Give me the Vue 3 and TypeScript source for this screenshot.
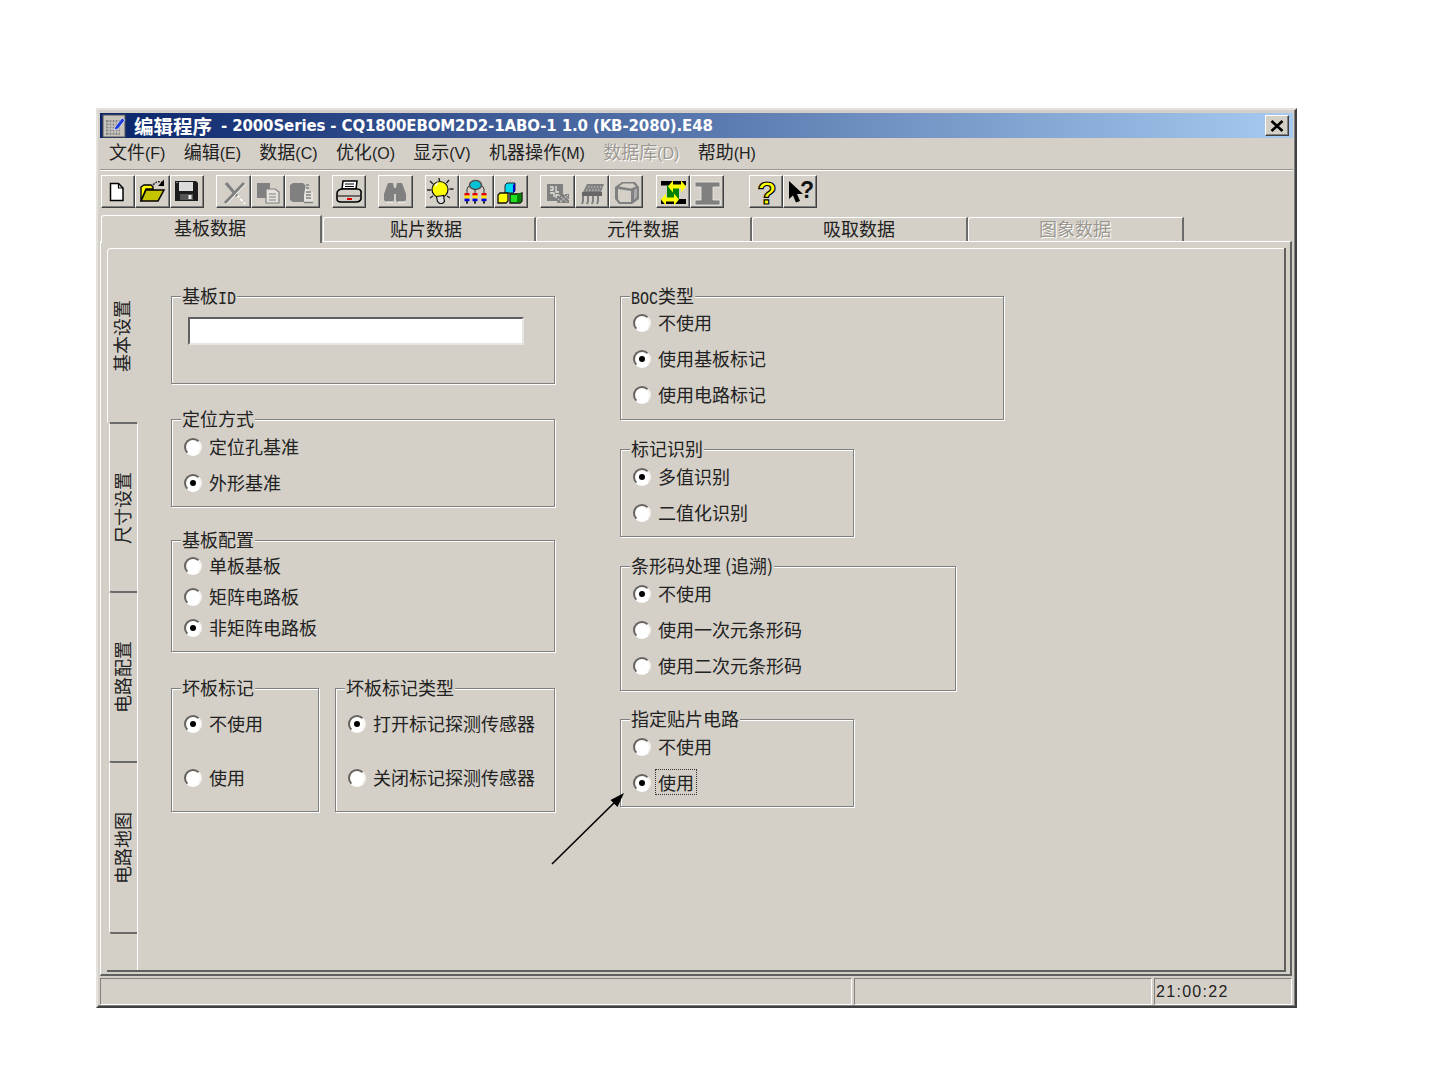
<script setup lang="ts">
const menus = [
  { t: '文件', k: '(F)' }, { t: '编辑', k: '(E)' }, { t: '数据', k: '(C)' }, { t: '优化', k: '(O)' },
  { t: '显示', k: '(V)' }, { t: '机器操作', k: '(M)' }, { t: '数据库', k: '(D)', off: true }, { t: '帮助', k: '(H)' },
]
const g = '#808080'
const bars = [8, 16, 25]
  .map(
    (x) =>
      `<path d="M${x} 14v4" stroke="#333"/><rect x="${x - 2.5}" y="18" width="5" height="2.6" fill="#e80000"/><rect x="${x - 2.5}" y="20.600" width="5" height="3" fill="#ffe800"/><rect x="${x - 2.5}" y="23.600" width="5" height="2.6" fill="#0000e0"/><rect x="${x - 1}" y="26.200" width="2" height="2.400" fill="#222"/>`,
  )
  .join('')
const icons: Record<string, string> = {
  fresh: `<path d="M9.500 8.500h8l4.500 4.500v12.500H9.500z" fill="#fff" stroke="#000" stroke-width="1.500"/><path d="M17.500 8.500v4.500h4.500" fill="none" stroke="#000" stroke-width="1.200"/>`,
  open: `<path d="M6 26V12l3-2h7l2 2v2H11L6 26z" fill="#ffff00" stroke="#000" stroke-width="1.400"/><path d="M6 26l5-11h18l-6 11z" fill="#c4c400" stroke="#000" stroke-width="1.500"/><path d="M18 10q4-5 9-2.500" fill="none" stroke="#333" stroke-width="1.500" stroke-dasharray="2 1"/><path d="M29 4.500v6.500h-6z" fill="#000"/>`,
  save: `<path d="M5 6h21l2 2v18H5z" fill="#1c1c1c"/><rect x="9" y="7" width="14" height="9" fill="#dcdcdc"/><rect x="10" y="19" width="13" height="6" fill="#555"/><rect x="18.500" y="20" width="3" height="4" fill="#eee"/><path d="M6 7h2v1H6z" fill="#888"/>`,
  cut: `<path d="M10 8l18 20" stroke="#fff" stroke-width="1.800" stroke-dasharray="3 2" transform="translate(1 1)"/><path d="M10 8l11 13" stroke="${g}" stroke-width="3"/><path d="M28 8L9 28" stroke="#fff" stroke-width="1.800" transform="translate(1 1)"/><path d="M28 8L9 28" stroke="${g}" stroke-width="2.800"/>`,
  copy: `<rect x="6" y="8" width="13" height="15" fill="${g}"/><path d="M15 14h9l4 3v11H15z" fill="#e6e3dc" stroke="${g}" stroke-width="1.200"/><path d="M18 19h7M18 22h7M18 25h7" stroke="${g}"/>`,
  paste: `<path d="M8 8h10l3 3v16H8l-3-2V10z" fill="${g}"/><path d="M21 9v5l7 3v11h-9v-8z" fill="#e6e3dc"/><path d="M21 10h3M21 13h3M21 17h5M21 20h5M21 23h5M19 27.500h9" stroke="${g}" stroke-width="1.300"/>`,
  print: `<path d="M11 6h14l-1 8H10z" fill="#fff" stroke="#000" stroke-width="1.500"/><path d="M13 9h9M13 11.500h9" stroke="#000"/><path d="M5 19q0-5 6-5h14q5 0 4 5v5q-1 3-5 3H9q-4 0-4-3z" fill="#d4d0c8" stroke="#000" stroke-width="1.600"/><path d="M6 21h22" stroke="#000"/><rect x="15" y="23" width="5" height="2" fill="#e00000"/>`,
  find: `<path d="M10 8h5l1 5h2l1-5h5l4 11v6l-2 2h-7l-1-2v-6h-2v6l-1 2H8l-2-2v-6z" fill="${g}"/><path d="M8 27h7M20 27h7" stroke="#fff"/>`,
  bulb: `<path d="M14 3l.5 3M5 6l3 3M24 5l-2.500 3M2 15h4M24.500 14h4M5 23l3-2M25 23l-3-2" stroke="#222" stroke-width="1.400"/><circle cx="15" cy="14.500" r="8" fill="#ffff00" stroke="#111" stroke-width="1.200"/><path d="M10 11l3-3" stroke="#fff" stroke-width="1.600"/><path d="M11.500 21.500l7-1 1 6-2 2h-3l-2-2z" fill="#ddd" stroke="#111" stroke-width="1.200"/>`,
  tree: `<path d="M8 14q0-3 4-3M25 14q0-3-4-3" fill="none" stroke="#333"/><ellipse cx="16.500" cy="10" rx="6" ry="4.500" fill="#00c4d8" stroke="#555" stroke-width="1.600"/>${bars}`,
  cubes: `<path d="M11 10l2-2h8v8l-2 2h-8z" fill="#00d8f0" stroke="#222"/><path d="M19 10l2-2v8l-2 2z" fill="#0000d0"/><path d="M4 20l2-2h8v8l-2 2H4z" fill="#ffff00" stroke="#111" stroke-width="1.300"/><path d="M16 19h9l3-1v8l-2 2h-10z" fill="#20e020" stroke="#111" stroke-width="1.300"/><path d="M23 19l4-1v8l-4 2z" fill="#008000"/>`,
  board: `<rect x="7" y="9" width="16" height="17" fill="${g}"/><path d="M10 12h3v3h-3M16 11v6h3M10 18h4v4M19 20h-3v3" fill="none" stroke="#e6e3dc" stroke-width="1.300"/><path d="M19 19h10v9H17z" fill="${g}"/><path d="M19 20l9 8M24 19l5 6M18 24l5 4M28 20l-9 8" stroke="#e6e3dc" stroke-dasharray="1.500 1.500"/>`,
  chip: `<path d="M8 17l4-8h17l-3 8z" fill="${g}"/><path d="M11 15h14M13 12h14" stroke="#d4d0c8" stroke-dasharray="1.500 1.500"/><rect x="7" y="17" width="20" height="4" fill="#666"/><path d="M8 21v5l-1 3M13 21v5l-1 3M18 21v5l-1 3M23 21v5l-1 3" fill="none" stroke="${g}" stroke-width="2"/>`,
  box: `<path d="M6 12l7-5h13l4 5v12l-7 5H10l-4-5z" fill="${g}"/><path d="M9 14l13 2v11H11l-2-3z" fill="#d4d0c8"/><path d="M10 11.500l4-3h10l3 3-5 2z" fill="#d4d0c8"/><path d="M25 15l3-2v9l-3 3z" fill="#aaa"/>`,
  swap: `<path d="M5 6h25v4.500h-7v13.500h7v5H5v-5h6V10.500H5z" fill="#000"/><rect x="11" y="10" width="12" height="14" fill="#008000"/><path d="M12 11.500l5-6v4h8v-4l5 6-5 6v-4h-8v4z" fill="#ffff00"/><path d="M5 24.500l5-6v4h8v-4l5 6-5 6v-4h-8v4z" fill="#ffff00"/>`,
  beam: `<path d="M5 7h25v5h-7v13h7v5H5v-5h6V12H5z" fill="${g}" stroke="#eeece6" stroke-width=".8"/>`,
  help: `<text x="18" y="29" text-anchor="middle" class="q yq">?</text>`,
  pointer: `<path d="M6 6v18l4-3.500 3 7 4-1.500-3-7h6z" fill="#000"/><text x="24" y="23" text-anchor="middle" class="q bq">?</text>`,
}
const toolbar = [
  ['fresh', 'open', 'save'], ['cut', 'copy', 'paste'], ['print'], ['find'],
  ['bulb', 'tree', 'cubes'], ['board', 'chip', 'box'], ['swap', 'beam'], ['help', 'pointer'],
]
const tabs = [
  { t: '基板数据', c: 'first' }, { t: '贴片数据', c: 'w213' }, { t: '元件数据', c: '' },
  { t: '吸取数据', c: '' }, { t: '图象数据', c: 'off' },
]
const vtabs = ['基本设置', '尺寸设置', '电路配置', '电路地图']
type Opt = { t: string; on?: boolean; focus?: boolean }
type Grp = { c: string; pre: string; lat?: string; post?: string; input?: boolean; opts?: Opt[] }
const off = (t: string): Opt => ({ t })
const on = (t: string): Opt => ({ t, on: true })
const id: Grp = { c: 'g-id', pre: '基板', lat: 'ID', input: true }
const pos: Grp = { c: 'g-pos', pre: '定位方式', opts: [off('定位孔基准'), on('外形基准')] }
const cfg: Grp = { c: 'g-cfg', pre: '基板配置', opts: [off('单板基板'), off('矩阵电路板'), on('非矩阵电路板')] }
const bad: Grp = { c: 'g-bad', pre: '坏板标记', opts: [on('不使用'), off('使用')] }
const badType: Grp = { c: 'g-badt', pre: '坏板标记类型', opts: [on('打开标记探测传感器'), off('关闭标记探测传感器')] }
const right: Grp[] = [
  { c: 'g-boc', pre: '', lat: 'BOC', post: '类型', opts: [off('不使用'), on('使用基板标记'), off('使用电路标记')] },
  { c: 'g-mark', pre: '标记识别', opts: [on('多值识别'), off('二值化识别')] },
  { c: 'g-bar', pre: '条形码处理 (追溯)', opts: [on('不使用'), off('使用一次元条形码'), off('使用二次元条形码')] },
  { c: 'g-spec', pre: '指定贴片电路', opts: [off('不使用'), { t: '使用', on: true, focus: true }] },
]
const left: Grp[][] = [[id], [pos], [cfg], [bad, badType]]
</script>

<template>
  <div class="root">
    <div class="window">
      <div class="title">
        <svg class="appicon" viewBox="0 0 24 24" width="24" height="24">
          <rect x="1" y="1" width="22" height="22" fill="#c8c4bc" stroke="#555" />
          <path d="M4 6h14v15H4z" fill="#8c8880" />
          <path d="M4 9h14M4 12h14M4 15h14M4 18h14M7 6v15M10 6v15M13 6v15M16 6v15" stroke="#d0d0d0" />
          <path d="M13 13l7-9 3 2-7 9-4 1z" fill="#1c3cd8" stroke="#fff" stroke-width=".6" />
        </svg>
        <span class="cn">编辑程序</span>
        <span class="lt">- 2000Series - CQ1800EBOM2D2-1ABO-1 1.0 (KB-2080).E48</span>
        <button class="close">
          <svg viewBox="0 0 14 12" width="14" height="12"><path d="M1.500 1l11 10M12.500 1l-11 10" stroke="#000" stroke-width="2.600" /></svg>
        </button>
      </div>

      <div class="menu">
        <span v-for="m in menus" :key="m.t" class="menuitem" :class="{ off: m.off }">{{ m.t }}<i>{{ m.k }}</i></span>
      </div>

      <div class="toolbar">
        <div v-for="(grp, i) in toolbar" :key="i" class="tgroup">
          <div v-for="b in grp" :key="b" class="tbtn">
            <svg viewBox="0 0 34 33" width="34" height="33" v-html="icons[b]"></svg>
          </div>
        </div>
      </div>

      <div class="tabs">
        <div v-for="t in tabs" :key="t.t" class="tab" :class="t.c">{{ t.t }}</div>
      </div>

      <div class="frame">
        <div class="tabpage">
          <div class="vtabs">
            <div v-for="(v, i) in vtabs" :key="v" class="vtab" :class="i === 0 ? 'active' : 'v' + i"><span>{{ v }}</span></div>
          </div>
          <div class="page">
            <div class="col">
              <div v-for="(row, ri) in left" :key="ri" class="grow">
                <fieldset v-for="gp in row" :key="gp.c" class="group" :class="gp.c">
                  <div class="legend">{{ gp.pre }}<span v-if="gp.lat" class="lat">{{ gp.lat }}</span>{{ gp.post }}</div>
                  <div v-if="gp.input" class="input"></div>
                  <div v-else class="rows">
                    <div v-for="o in gp.opts" :key="o.t" class="row">
                      <span class="radio" :class="{ on: o.on }"></span>
                      <span class="label" :class="{ focus: o.focus }">{{ o.t }}</span>
                    </div>
                  </div>
                </fieldset>
              </div>
            </div>
            <div class="col">
              <fieldset v-for="gp in right" :key="gp.c" class="group" :class="gp.c">
                <div class="legend">{{ gp.pre }}<span v-if="gp.lat" class="lat">{{ gp.lat }}</span>{{ gp.post }}</div>
                <div class="rows">
                  <div v-for="o in gp.opts" :key="o.t" class="row">
                    <span class="radio" :class="{ on: o.on }"></span>
                    <span class="label" :class="{ focus: o.focus }">{{ o.t }}</span>
                  </div>
                </div>
              </fieldset>
            </div>
          </div>
        </div>
      </div>

      <div class="status">
        <div class="cell c1"></div>
        <div class="cell c2"></div>
        <div class="cell c3">21:00:22</div>
      </div>
    </div>

    <svg class="arrow" viewBox="0 0 90 90" width="90" height="90">
      <path d="M6 76L70 13" stroke="#000" stroke-width="1.600" />
      <path d="M78 5L64.500 12 71.500 19z" fill="#000" />
    </svg>
  </div>
</template>

<style>
html, body { background: #fff; margin: 0; }
</style>

<style scoped>
.root {
  position: relative;
  width: 1440px;
  height: 1080px;
  padding: 108px 0 0 96px;
  box-sizing: border-box;
  font-family: "Noto Sans CJK SC", "Liberation Sans", sans-serif;
  font-size: 18px;
  color: #222;
}
.window {
  width: 1201px;
  height: 900px;
  box-sizing: border-box;
  background: #d4d0c8;
  border: 2px solid;
  border-color: #e4e2dc #404040 #404040 #e4e2dc;
  padding: 3px 2px 0;
  box-shadow: inset -1px -1px 0 #808080;
  display: flex;
  flex-direction: column;
}
.title {
  height: 25px;
  flex: none;
  display: flex;
  align-items: center;
  background: linear-gradient(90deg, #0a246a, #a6caf0);
  color: #fff;
  padding: 0 4px 0 2px;
}
.appicon { flex: none; }
.cn { font-weight: 700; font-size: 19.500px; margin-left: 8px; line-height: 25px; }
.lt {
  font-family: "DejaVu Sans", sans-serif;
  font-weight: 700;
  font-size: 15px;
  margin-left: 9px;
  white-space: pre;
  letter-spacing: -0.130px;
}
.close {
  margin-left: auto;
  width: 24px;
  height: 21px;
  padding: 0;
  background: #d4d0c8;
  border: 1px solid;
  border-color: #fff #404040 #404040 #fff;
  box-shadow: inset -1px -1px 0 #808080;
  display: flex;
  align-items: center;
  justify-content: center;
}
.menu {
  height: 28px;
  flex: none;
  display: flex;
  align-items: center;
  gap: 18.300px;
  padding: 0 0 3px 9px;
  border-bottom: 1px solid #9a968e;
  box-shadow: 0 1px 0 #fff;
  line-height: 28px;
}
.menuitem { white-space: nowrap; }
.menuitem i { font-style: normal; font-family: "Liberation Sans", sans-serif; font-size: 16px; }
.menuitem.off { color: #9c9890; text-shadow: 1px 1px 0 #fff; }
.toolbar {
  flex: none;
  display: flex;
  gap: 12.200px;
  padding: 5px 0 0 1px;
  height: 33px;
}
.tgroup { display: flex; }
.tgroup:last-child { margin-left: 12px; }
.tbtn {
  width: 34.400px;
  height: 33px;
  box-sizing: border-box;
  border: 1px solid;
  border-color: #fff #404040 #404040 #fff;
  box-shadow: inset -1px -1px 0 #808080;
}
.tbtn svg { display: block; margin: -1px; overflow: visible; }
.tbtn :deep(.q) { font-family: "Liberation Sans", sans-serif; font-weight: 700; }
.tbtn :deep(.yq) { font-size: 32px; fill: #ffff00; stroke: #000; stroke-width: 1.200px; }
.tbtn :deep(.bq) { font-size: 23px; fill: #111; }
.tabs {
  flex: none;
  display: flex;
  align-items: flex-start;
  height: 26px;
  margin-top: 7px;
  padding-left: 1px;
  position: relative;
  z-index: 2;
}
.tab {
  width: 216px;
  height: 24px;
  margin-top: 2px;
  box-sizing: border-box;
  border-top: 1px solid #fff;
  border-left: 1px solid #fff;
  border-right: 2px solid #6a6a6a;
  text-align: center;
  line-height: 20px;
  padding-right: 1px;
  border-top-left-radius: 3px;
}
.tab.first {
  width: 221px;
  height: 28px;
  margin: 0 1px 0 0;
  background: #d4d0c8;
  line-height: 23px;
  padding-right: 2px;
}
.tab.w213 { width: 213px; padding-right: 6px; }
.tab.off { color: #9c9890; text-shadow: 1px 1px 0 #fff; }
.frame {
  flex: none;
  height: 735px;
  box-sizing: border-box;
  width: 1192px;
  border-top: 1px solid #fff;
  border-left: 1px solid #fff;
  border-right: 2px solid #606060;
  border-bottom: 2px solid #606060;
  padding: 6px 4px 2px 6px;
}
.tabpage {
  display: flex;
  height: 724px;
  box-sizing: border-box;
  border-right: 2px solid #606060;
  border-bottom: 2px solid #606060;
}
.vtabs { flex: none; width: 30px; }
.vtab {
  box-sizing: border-box;
  margin-left: 2px;
  width: 28px;
  height: 170px;
  border-left: 1px solid #fff;
  border-bottom: 2px solid #6a6a6a;
  border-bottom-left-radius: 3px;
  display: flex;
  align-items: center;
  justify-content: center;
}
.vtab.active {
  position: relative;
  margin-left: 0;
  width: 31px;
  height: 176px;
  border-top: 1px solid #fff;
  border-top-left-radius: 4px;
  background: #d4d0c8;
  border-bottom-color: transparent;
  padding-right: 1px;
}
.vtab.active::after {
  content: "";
  position: absolute;
  left: 2px;
  right: 1px;
  bottom: -2px;
  height: 2px;
  background: #6a6a6a;
}
.vtab.v1 { height: 169px; }
.vtab.v3 { height: 171px; }
.vtab span {
  writing-mode: vertical-rl;
  text-orientation: sideways;
  transform: rotate(180deg);
  line-height: 20px;
  margin-right: 4px;
}
.page {
  flex: 1;
  box-sizing: border-box;
  border-top: 1px solid #fff;
  border-left: 1px solid #fff;
  padding: 47px 0 0 33px;
  display: flex;
  gap: 65px;
}
.col { display: flex; flex-direction: column; flex: none; }
.grow { display: flex; gap: 16px; }
.group {
  position: relative;
  margin: 0;
  padding: 0 0 0 12px;
  min-width: 0;
  box-sizing: border-box;
  border: 1px solid #808080;
  box-shadow: 1px 1px 0 #fff, inset 1px 1px 0 #fff;
}
.legend {
  position: absolute;
  left: 9px;
  top: -12px;
  padding: 0 1px;
  height: 20px;
  line-height: 20px;
  background: linear-gradient(#d4d0c8, #d4d0c8) 0 0 / 100% 16px no-repeat;
  white-space: pre;
}
.lat {
  display: inline-block;
  font-family: "Liberation Mono", monospace;
  font-size: 15px;
  transform: scaleY(1.250);
}
.input {
  width: 336px;
  height: 28px;
  margin: 20px 0 0 4px;
  box-sizing: border-box;
  background: #fff;
  border: 2px solid;
  border-color: #606060 #e8e6e0 #e8e6e0 #606060;
}
.rows { display: flex; flex-direction: column; gap: 16px; padding-top: 17px; }
.row { display: flex; align-items: center; gap: 7px; height: 20px; }
.radio {
  position: relative;
  flex: none;
  width: 18px;
  height: 18px;
  box-sizing: border-box;
  border-radius: 50%;
  background: #fff;
  border: 2px solid;
  border-color: #66635e #f4f3ef #fff #66635e;
}
.radio.on::after {
  content: "";
  position: absolute;
  left: 4px;
  top: 4px;
  width: 6px;
  height: 6px;
  border-radius: 50%;
  background: #000;
}
.label { line-height: 20px; white-space: nowrap; margin-bottom: 2px; }
.label.focus {
  margin-left: -2px;
  padding: 2px 2px;
  outline: 1px dotted #333;
}
.g-id { width: 384px; height: 88px; }
.g-pos { width: 384px; height: 88px; margin-top: 35px; }
.g-cfg { width: 384px; height: 112px; margin-top: 33px; }
.g-cfg .rows { gap: 11px; padding-top: 15px; }
.g-bad { width: 148px; height: 124px; margin-top: 36px; }
.g-badt { width: 220px; height: 124px; margin-top: 36px; }
.g-bad .rows, .g-badt .rows { gap: 34px; padding-top: 25px; }
.g-boc { width: 384px; height: 124px; }
.g-boc .rows { padding-top: 16px; }
.g-mark { width: 234px; height: 88px; margin-top: 29px; }
.g-bar { width: 336px; height: 125px; margin-top: 29px; }
.g-spec { width: 234px; height: 88px; margin-top: 28px; }
.c1, .c2, .c3 { flex: none; }
.status {
  flex: none;
  display: flex;
  gap: 2px;
  height: 27px;
  margin-top: 2px;
  width: 1192px;
}
.cell {
  box-sizing: border-box;
  border: 1px solid;
  border-color: #808080 #fff #fff #808080;
  height: 27px;
}
.c1 { width: 752px; }
.c2 { width: 298px; }
.c3 {
  width: 138px;
  padding-left: 1px;
  font-family: "Liberation Sans", sans-serif;
  font-size: 16px;
  line-height: 26px;
  letter-spacing: 1.300px;
}
.arrow { position: absolute; left: 546px; top: 788px; }
</style>
